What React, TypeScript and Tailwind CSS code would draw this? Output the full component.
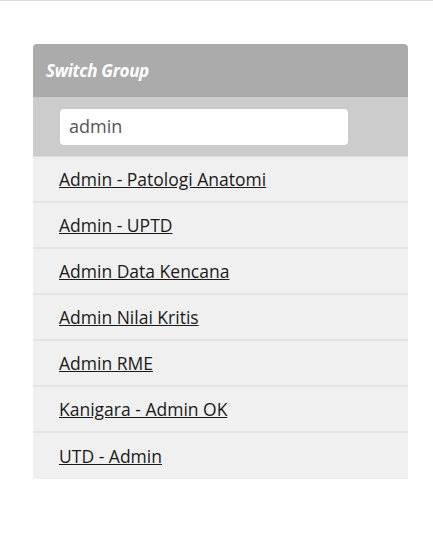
import React from "react";

const items = [
  "Admin - Patologi Anatomi",
  "Admin - UPTD",
  "Admin Data Kencana",
  "Admin Nilai Kritis",
  "Admin RME",
  "Kanigara - Admin OK",
  "UTD - Admin",
];

export default function App() {
  return (
    <div className="w-[433px] h-[538px] bg-white border-t border-[#dddddd]" style={{ fontFamily: '"Open Sans", sans-serif' }}>
      <div className="ml-[33px] mt-[43px] w-[375px]">
        <div className="h-[53px] bg-[#ababab] rounded-t-[4px] flex items-center px-[13px]">
          <span className="text-white italic font-bold text-[17px] tracking-[-0.3px]">Switch Group</span>
        </div>
        <div className="h-[60px] bg-[#cccccc] flex items-center pl-[27px] border-b border-[#dcdcdc]">
          <div className="w-[288px] h-[36px] bg-white rounded-[4px] flex items-center pl-[9px] text-[18px] text-[#555555]">
            admin
          </div>
        </div>
        <div className="bg-[#f0f0f0]">
          {items.map((t, i) => (
            <div
              key={t}
              className={`h-[46px] flex items-center pl-[26px] ${i < items.length - 1 ? "border-b-2 border-[#e4e4e4]" : ""}`}
            >
              <a href="#" className="text-[17.5px] text-[#1a1a1a] underline">
                {t}
              </a>
            </div>
          ))}
        </div>
      </div>
    </div>
  );
}
